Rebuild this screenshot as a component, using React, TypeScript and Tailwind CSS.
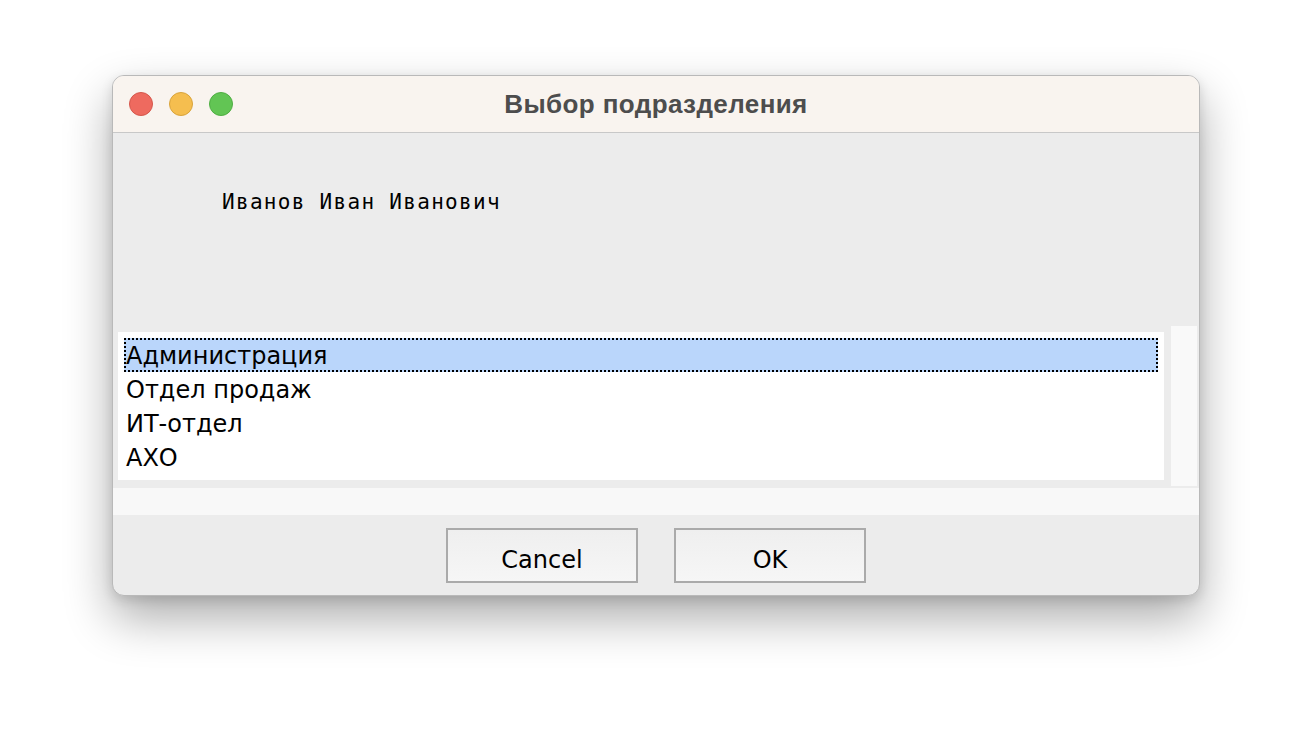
import React from 'react';

const departments = ['Администрация', 'Отдел продаж', 'ИТ-отдел', 'АХО'];

function TrafficLights(): JSX.Element {
  return (
    <div className="flex items-center gap-4 pl-4">
      <span className="h-6 w-6 rounded-full bg-[#ee6a5f] border border-[#d5574c]" />
      <span className="h-6 w-6 rounded-full bg-[#f5be4f] border border-[#d9a43c]" />
      <span className="h-6 w-6 rounded-full bg-[#62c554] border border-[#4fae43]" />
    </div>
  );
}

export default function App(): JSX.Element {
  const selected = 0;

  return (
    <div className="w-[1312px] h-[744px] bg-white flex justify-center font-['DejaVu_Sans',sans-serif]">
      <div className="mt-[75px] w-[1088px] h-[521px] flex flex-col rounded-[12px] overflow-hidden border border-[#b9b9b9] bg-[#ececec] shadow-[0_22px_48px_rgba(0,0,0,0.33),0_4px_12px_rgba(0,0,0,0.12)]">
        {/* title bar */}
        <div className="h-[57px] shrink-0 grid grid-cols-[1fr_auto_1fr] items-center bg-[#f9f4ef] border-b border-[#c8c8c8]">
          <TrafficLights />
          <div className="font-['Liberation_Sans',Arial,sans-serif] text-[26px] font-bold text-[#4d4d4d] tracking-[0.4px]">
            Выбор подразделения
          </div>
          <div />
        </div>

        {/* name label */}
        <div className="h-[193px] shrink-0 pl-[109px] pt-[54px]">
          <span className="font-['DejaVu_Sans_Mono',monospace] text-[21px] tracking-[1.3px] text-black">
            Иванов Иван Иванович
          </span>
        </div>

        {/* list + scroller */}
        <div className="flex shrink-0 h-[162px]">
          <div className="ml-[5px] mt-[6px] w-[1046px] h-[148px] bg-white pt-[6px] pl-[6px] pr-[6px]">
            {departments.map((d, i) => (
              <div
                key={d}
                className={
                  i === selected
                    ? 'h-[34px] flex items-center pt-[1px] bg-[#bad6fb] border-2 border-dotted border-black text-[24px] text-black'
                    : 'h-[34px] flex items-center pt-[1px] pl-[2px] text-[24px] text-black'
                }
              >
                {d}
              </div>
            ))}
          </div>
          <div className="ml-[7px] w-[26px] h-[160px] bg-[#f9f9f9]" />
        </div>

        {/* horizontal scroller strip */}
        <div className="h-[27px] shrink-0 bg-[#f8f8f8]" />

        {/* buttons */}
        <div className="flex-1 flex justify-center items-start pt-[13px] gap-9">
          <button className="w-[192px] h-[55px] pt-[8px] border-2 border-[#aaaaaa] bg-gradient-to-b from-[#efefef] to-[#f6f6f6] text-[24px] text-black">
            Cancel
          </button>
          <button className="w-[192px] h-[55px] pt-[8px] border-2 border-[#aaaaaa] bg-gradient-to-b from-[#efefef] to-[#f6f6f6] text-[24px] text-black">
            OK
          </button>
        </div>
      </div>
    </div>
  );
}
